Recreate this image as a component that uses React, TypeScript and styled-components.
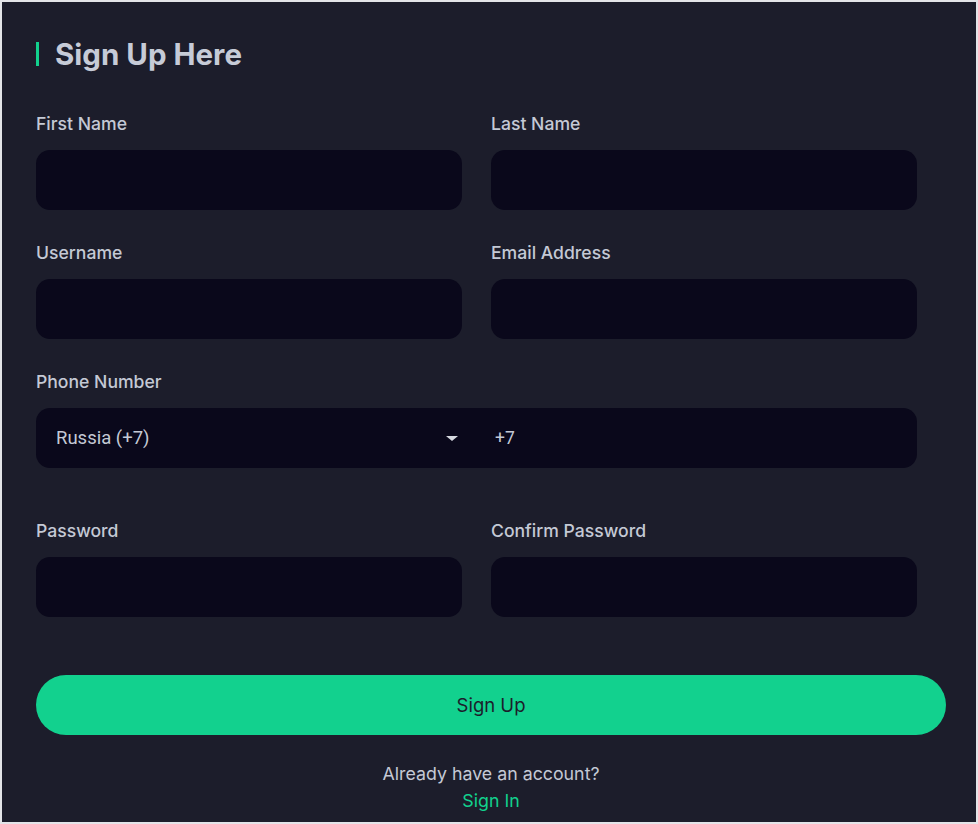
import styled, { createGlobalStyle } from "styled-components";

const GlobalStyle = createGlobalStyle`
  html, body {
    margin: 0;
    padding: 0;
    background: #1c1d2b;
  }
  * { box-sizing: border-box; }
`;

export default function App() {
    return (
        <>
            <GlobalStyle/>
            <Page>
                <Title>Sign Up Here</Title>
                <FormGrid>
                    <Field>
                        <Label>First Name</Label>
                        <Input/>
                    </Field>
                    <Field>
                        <Label>Last Name</Label>
                        <Input/>
                    </Field>
                    <Field>
                        <Label>Username</Label>
                        <Input/>
                    </Field>
                    <Field>
                        <Label>Email Address</Label>
                        <Input type="email"/>
                    </Field>
                    <Field $wide>
                        <Label>Phone Number</Label>
                        <PhoneBox>
                            <CountrySelect>
                                <span>Russia (+7)</span>
                                <Caret/>
                            </CountrySelect>
                            <PhoneInput defaultValue="+7"/>
                        </PhoneBox>
                    </Field>
                    <Field $spaced>
                        <Label>Password</Label>
                        <Input type="password"/>
                    </Field>
                    <Field $spaced>
                        <Label>Confirm Password</Label>
                        <Input type="password"/>
                    </Field>
                </FormGrid>
                <SubmitButton>Sign Up</SubmitButton>
                <Footer>
                    <span>Already have an account?</span>
                    <SignInLink href="#">Sign In</SignInLink>
                </Footer>
            </Page>
        </>
    )
}

const Page = styled.div`
    width: 978px;
    height: 824px;
    border: 2px solid #e3e4e8;
    background: #1c1d2b;
    padding: 35px 30px 0 34px;
    font-family: Inter, "Open Sans", sans-serif;
    color: #c4c9d5;
    display: flex;
    flex-direction: column;`
const Title = styled.h1`
    margin: 0;
    display: flex;
    align-items: center;
    gap: 16px;
    font-size: 29.5px;
    line-height: 34px;
    font-weight: 700;
    color: #c6cbd7;
    &::before {
        content: "";
        width: 3px;
        height: 24px;
        background: #12d18e;
    }`
const FormGrid = styled.div`
    margin-top: 42px;
    width: 880px;
    display: grid;
    grid-template-columns: 426px 426px;
    column-gap: 29px;
    row-gap: 32px;`
const Field = styled.div<{ $wide?: boolean; $spaced?: boolean }>`
    display: flex;
    flex-direction: column;
    gap: 15px;
    grid-column: ${p => p.$wide ? "1 / span 2" : "auto"};
    margin-top: ${p => p.$spaced ? "20px" : "0"};`
const Label = styled.label`
    font-size: 17.6px;
    line-height: 22px;
    font-weight: 500;
    color: #c4c9d5;`
const Input = styled.input`
    height: 60px;
    width: 100%;
    border: none;
    outline: none;
    border-radius: 14px;
    background: #0a081b;
    color: #c4c9d5;
    padding: 0 20px;
    font-size: 17px;`
const PhoneBox = styled.div`
    height: 60px;
    border-radius: 14px;
    background: #0a081b;
    display: grid;
    grid-template-columns: 426px 1fr;
    column-gap: 29px;
    align-items: center;`
const CountrySelect = styled.div`
    display: flex;
    align-items: center;
    justify-content: space-between;
    padding: 0 4px 0 20px;
    font-family: Roboto, "Liberation Sans", sans-serif;
    font-size: 18.5px;
    color: #c4c9d5;`
const Caret = styled.span`
    width: 0;
    height: 0;
    border-left: 6px solid transparent;
    border-right: 6px solid transparent;
    border-top: 5px solid #d6d9e0;`
const PhoneInput = styled.input`
    border: none;
    outline: none;
    background: transparent;
    color: #c4c9d5;
    font-family: Roboto, "Liberation Sans", sans-serif;
    font-size: 17.5px;
    padding: 0 4px;
    height: 100%;`
const SubmitButton = styled.button`
    margin-top: 58px;
    height: 60px;
    width: 910px;
    border: none;
    border-radius: 30px;
    background: #12d18e;
    color: #1c1d2b;
    font-family: Inter, "Open Sans", sans-serif;
    font-size: 18.5px;
    cursor: pointer;`
const Footer = styled.div`
    margin-top: 25px;
    display: flex;
    flex-direction: column;
    align-items: center;
    font-size: 17.8px;
    line-height: 27px;
    color: #c4c9d5;`
const SignInLink = styled.a`
    color: #12d18e;
    text-decoration: none;`
